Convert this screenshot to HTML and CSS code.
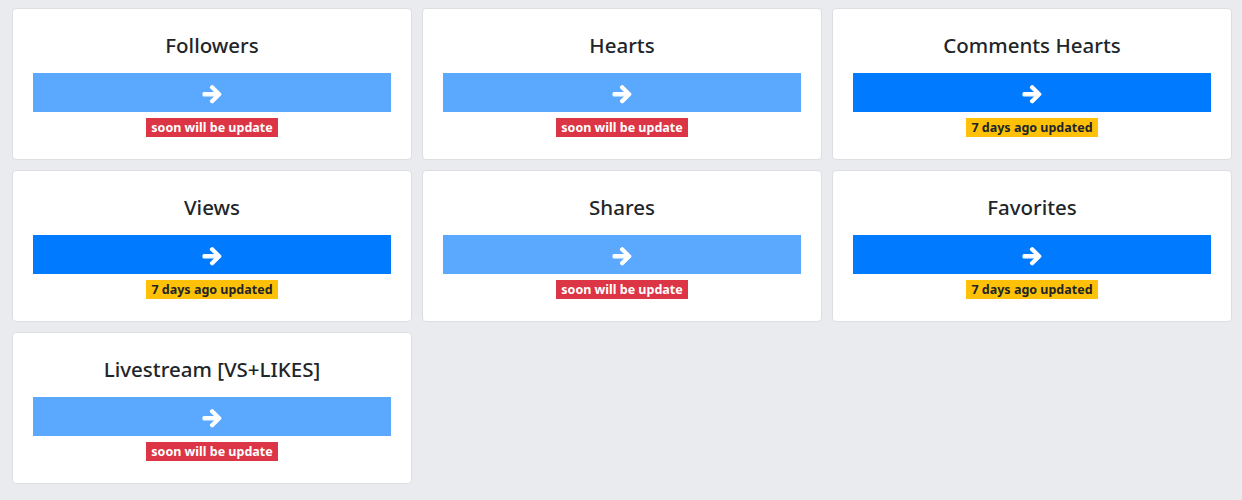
FILE: index.html
```html
<!DOCTYPE html>
<html>
	<head>
		<meta charset="UTF-8">
		<title>Tools</title>
		<link rel="stylesheet" href="styles.css">
	</head>
	<body>
		<div id="box">
			<div class="card">
				<h4 class="title">Followers</h4>
				<a class="btn light" href="#"><svg viewBox="0 0 448 512"><path d="M190.5 66.9l22.2-22.2c9.4-9.4 24.6-9.4 33.9 0L441 239c9.4 9.4 9.4 24.6 0 33.9L246.6 467.3c-9.4 9.4-24.6 9.4-33.9 0l-22.2-22.2c-9.5-9.5-9.3-25 .4-34.3L311.4 296H24c-13.3 0-24-10.7-24-24v-32c0-13.3 10.7-24 24-24h287.4L190.9 101.2c-9.8-9.3-10-24.8-.4-34.3z"/></svg></a>
				<div class="status"><span class="badge red">soon will be update</span></div>
			</div>
			<div class="card">
				<h4 class="title">Hearts</h4>
				<a class="btn light" href="#"><svg viewBox="0 0 448 512"><path d="M190.5 66.9l22.2-22.2c9.4-9.4 24.6-9.4 33.9 0L441 239c9.4 9.4 9.4 24.6 0 33.9L246.6 467.3c-9.4 9.4-24.6 9.4-33.9 0l-22.2-22.2c-9.5-9.5-9.3-25 .4-34.3L311.4 296H24c-13.3 0-24-10.7-24-24v-32c0-13.3 10.7-24 24-24h287.4L190.9 101.2c-9.8-9.3-10-24.8-.4-34.3z"/></svg></a>
				<div class="status"><span class="badge red">soon will be update</span></div>
			</div>
			<div class="card">
				<h4 class="title">Comments Hearts</h4>
				<a class="btn" href="#"><svg viewBox="0 0 448 512"><path d="M190.5 66.9l22.2-22.2c9.4-9.4 24.6-9.4 33.9 0L441 239c9.4 9.4 9.4 24.6 0 33.9L246.6 467.3c-9.4 9.4-24.6 9.4-33.9 0l-22.2-22.2c-9.5-9.5-9.3-25 .4-34.3L311.4 296H24c-13.3 0-24-10.7-24-24v-32c0-13.3 10.7-24 24-24h287.4L190.9 101.2c-9.8-9.3-10-24.8-.4-34.3z"/></svg></a>
				<div class="status"><span class="badge yellow">7 days ago updated</span></div>
			</div>
			<div class="card">
				<h4 class="title">Views</h4>
				<a class="btn" href="#"><svg viewBox="0 0 448 512"><path d="M190.5 66.9l22.2-22.2c9.4-9.4 24.6-9.4 33.9 0L441 239c9.4 9.4 9.4 24.6 0 33.9L246.6 467.3c-9.4 9.4-24.6 9.4-33.9 0l-22.2-22.2c-9.5-9.5-9.3-25 .4-34.3L311.4 296H24c-13.3 0-24-10.7-24-24v-32c0-13.3 10.7-24 24-24h287.4L190.9 101.2c-9.8-9.3-10-24.8-.4-34.3z"/></svg></a>
				<div class="status"><span class="badge yellow">7 days ago updated</span></div>
			</div>
			<div class="card">
				<h4 class="title">Shares</h4>
				<a class="btn light" href="#"><svg viewBox="0 0 448 512"><path d="M190.5 66.9l22.2-22.2c9.4-9.4 24.6-9.4 33.9 0L441 239c9.4 9.4 9.4 24.6 0 33.9L246.6 467.3c-9.4 9.4-24.6 9.4-33.9 0l-22.2-22.2c-9.5-9.5-9.3-25 .4-34.3L311.4 296H24c-13.3 0-24-10.7-24-24v-32c0-13.3 10.7-24 24-24h287.4L190.9 101.2c-9.8-9.3-10-24.8-.4-34.3z"/></svg></a>
				<div class="status"><span class="badge red">soon will be update</span></div>
			</div>
			<div class="card">
				<h4 class="title">Favorites</h4>
				<a class="btn" href="#"><svg viewBox="0 0 448 512"><path d="M190.5 66.9l22.2-22.2c9.4-9.4 24.6-9.4 33.9 0L441 239c9.4 9.4 9.4 24.6 0 33.9L246.6 467.3c-9.4 9.4-24.6 9.4-33.9 0l-22.2-22.2c-9.5-9.5-9.3-25 .4-34.3L311.4 296H24c-13.3 0-24-10.7-24-24v-32c0-13.3 10.7-24 24-24h287.4L190.9 101.2c-9.8-9.3-10-24.8-.4-34.3z"/></svg></a>
				<div class="status"><span class="badge yellow">7 days ago updated</span></div>
			</div>
			<div class="card">
				<h4 class="title">Livestream [VS+LIKES]</h4>
				<a class="btn light" href="#"><svg viewBox="0 0 448 512"><path d="M190.5 66.9l22.2-22.2c9.4-9.4 24.6-9.4 33.9 0L441 239c9.4 9.4 9.4 24.6 0 33.9L246.6 467.3c-9.4 9.4-24.6 9.4-33.9 0l-22.2-22.2c-9.5-9.5-9.3-25 .4-34.3L311.4 296H24c-13.3 0-24-10.7-24-24v-32c0-13.3 10.7-24 24-24h287.4L190.9 101.2c-9.8-9.3-10-24.8-.4-34.3z"/></svg></a>
				<div class="status"><span class="badge red">soon will be update</span></div>
			</div>
		</div>
	</body>
</html>
```

FILE: styles.css
```css
* {margin: 0; padding: 0; box-sizing: border-box;}
body {
	background: #e9ebee;
	font-family: "Noto Sans", "Open Sans", sans-serif;
	color: #212529;
}
#box {
	display: grid;
	grid-template-columns: repeat(3, 400px);
	gap: 10px;
	padding: 8px 0 0 12px;
}
.card {
	background: #fff;
	border: 1px solid #dcdee2;
	border-radius: 4px;
	padding: 20px 20px 23px;
	height: 152px;
	text-align: center;
}
.card .title {
	font-size: 20.5px;
	font-weight: 500;
	line-height: 32px;
	margin-bottom: 12px;
}
.card .btn {
	display: flex;
	align-items: center;
	justify-content: center;
	height: 39px;
	background: #007bff;
}
.card .btn.light {
	background: #5aa9ff;
}
.card .btn svg {
	width: 18px;
	height: 20.5px;
	margin-top: 3px;
	fill: #fff;
	stroke: #fff;
	stroke-width: 28;
	stroke-linejoin: round;
	overflow: visible;
}
.card .status {
	margin-top: 5px;
	line-height: 19px;
}
.card .badge {
	display: inline-block;
	font-size: 12.5px;
	font-weight: 700;
	padding: 0 5px;
	line-height: 19px;
}
.card .badge.red {
	background: #dc3545;
	color: #fff;
}
.card .badge.yellow {
	background: #ffc107;
	color: #212529;
}
```
